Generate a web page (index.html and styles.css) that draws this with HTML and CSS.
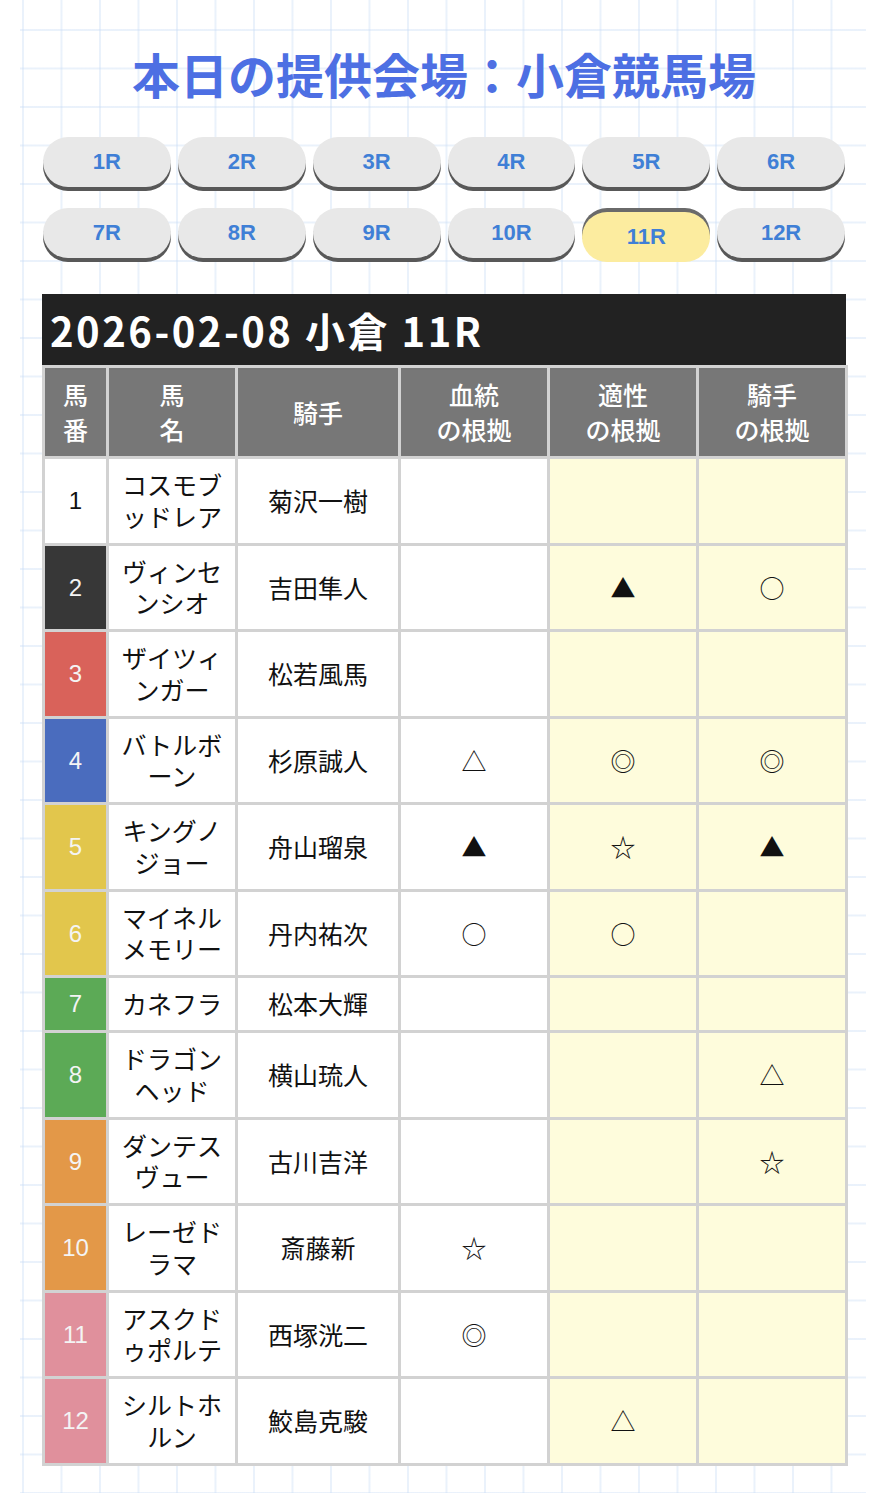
FILE: index.html
```html
<!DOCTYPE html>
<html lang="ja">
<head>
<meta charset="utf-8">
<title>本日の提供会場：小倉競馬場</title>
<link rel="stylesheet" href="styles.css">
</head>
<body>
<div class="page">
  <h1 class="venue">本日の提供会場：小倉競馬場</h1>
  <nav class="races">
    <a class="race-btn">1R</a>
    <a class="race-btn">2R</a>
    <a class="race-btn">3R</a>
    <a class="race-btn">4R</a>
    <a class="race-btn">5R</a>
    <a class="race-btn">6R</a>
    <a class="race-btn">7R</a>
    <a class="race-btn">8R</a>
    <a class="race-btn">9R</a>
    <a class="race-btn">10R</a>
    <a class="race-btn active">11R</a>
    <a class="race-btn">12R</a>
  </nav>

  <div class="race-title">2026-02-08 小倉 11R</div>
  <table class="entries">
    <colgroup>
      <col class="c-num"><col class="c-name"><col class="c-jockey"><col class="c-mark"><col class="c-mark"><col class="c-mark">
    </colgroup>
    <thead>
      <tr>
        <th>馬<br>番</th>
        <th>馬<br>名</th>
        <th>騎手</th>
        <th>血統<br>の根拠</th>
        <th>適性<br>の根拠</th>
        <th>騎手<br>の根拠</th>
      </tr>
    </thead>
    <tbody>
      <tr>
        <td class="num w1">1</td><td>コスモブ<br>ッドレア</td><td>菊沢一樹</td>
        <td class="mark"></td><td class="mark hl"></td><td class="mark hl"></td>
      </tr>
      <tr>
        <td class="num w2">2</td><td>ヴィンセ<br>ンシオ</td><td>吉田隼人</td>
        <td class="mark"></td><td class="mark hl">▲</td><td class="mark hl">○</td>
      </tr>
      <tr>
        <td class="num w3">3</td><td>ザイツィ<br>ンガー</td><td>松若風馬</td>
        <td class="mark"></td><td class="mark hl"></td><td class="mark hl"></td>
      </tr>
      <tr>
        <td class="num w4">4</td><td>バトルボ<br>ーン</td><td>杉原誠人</td>
        <td class="mark">△</td><td class="mark hl">◎</td><td class="mark hl">◎</td>
      </tr>
      <tr>
        <td class="num w5">5</td><td>キングノ<br>ジョー</td><td>舟山瑠泉</td>
        <td class="mark">▲</td><td class="mark hl">☆</td><td class="mark hl">▲</td>
      </tr>
      <tr>
        <td class="num w5">6</td><td>マイネル<br>メモリー</td><td>丹内祐次</td>
        <td class="mark">○</td><td class="mark hl">○</td><td class="mark hl"></td>
      </tr>
      <tr>
        <td class="num w6">7</td><td>カネフラ</td><td>松本大輝</td>
        <td class="mark"></td><td class="mark hl"></td><td class="mark hl"></td>
      </tr>
      <tr>
        <td class="num w6">8</td><td>ドラゴン<br>ヘッド</td><td>横山琉人</td>
        <td class="mark"></td><td class="mark hl"></td><td class="mark hl">△</td>
      </tr>
      <tr>
        <td class="num w7">9</td><td>ダンテス<br>ヴュー</td><td>古川吉洋</td>
        <td class="mark"></td><td class="mark hl"></td><td class="mark hl">☆</td>
      </tr>
      <tr>
        <td class="num w7">10</td><td>レーゼド<br>ラマ</td><td>斎藤新</td>
        <td class="mark">☆</td><td class="mark hl"></td><td class="mark hl"></td>
      </tr>
      <tr>
        <td class="num w8">11</td><td>アスクド<br>ゥポルテ</td><td>西塚洸二</td>
        <td class="mark">◎</td><td class="mark hl"></td><td class="mark hl"></td>
      </tr>
      <tr>
        <td class="num w8">12</td><td>シルトホ<br>ルン</td><td>鮫島克駿</td>
        <td class="mark"></td><td class="mark hl">△</td><td class="mark hl"></td>
      </tr>
    </tbody>
  </table>
</div>
</body>
</html>
```

FILE: styles.css
```css
html, body {
  margin: 0;
  padding: 0;
  background: #ffffff;
}

body {
  font-family: "Noto Sans CJK JP", "Noto Sans", sans-serif;
  color: #111;
}

.page {
  width: 804px;
  min-height: 1421px;
  margin-left: 20px;
  padding: 44px 20px 28px 22px;
  background-color: #ffffff;
  background-image:
    linear-gradient(rgba(200, 220, 245, 0.38) 2px, transparent 2px),
    linear-gradient(90deg, rgba(200, 220, 245, 0.38) 2px, transparent 2px);
  background-size: 38.5px 38.5px;
  background-position: 2px 29px;
}

.venue {
  margin: 0;
  text-align: center;
  font-size: 48px;
  line-height: 58px;
  font-weight: 700;
  color: #4d6fe3;
}

.races {
  display: grid;
  grid-template-columns: repeat(6, 1fr);
  column-gap: 7px;
  row-gap: 21px;
  margin-top: 35px;
  margin-left: 1px;
  margin-right: 1px;
}

.race-btn {
  display: flex;
  align-items: center;
  justify-content: center;
  height: 50px;
  border-radius: 25px;
  background: #e8e8e8;
  box-shadow: 0 4px 0 #585858;
  color: #3f7fd6;
  font-family: "Liberation Sans", "Noto Sans CJK JP", sans-serif;
  font-weight: 700;
  font-size: 22px;
}

.race-btn.active {
  background: #fcec9f;
  transform: translateY(4px);
  box-shadow: 0 -4px 0 #6a6a6a;
}

.race-title {
  margin-top: 36px;
  height: 71px;
  display: flex;
  align-items: center;
  padding-left: 8px;
  background: #222222;
  color: #ffffff;
  font-family: "Noto Sans CJK JP", sans-serif;
  font-weight: 700;
  font-size: 40px;
  letter-spacing: 2.5px;
}

.entries {
  width: 804px;
  border-collapse: collapse;
  table-layout: fixed;
  border: 3px solid #d2d2d2;
}

.c-num { width: 64px; }
.c-name { width: 129px; }
.c-jockey { width: 163px; }
.c-mark { width: 149px; }

.entries th,
.entries td {
  border: 3px solid #d2d2d2;
  text-align: center;
  vertical-align: middle;
  padding: 0;
}

.entries th {
  background: #777777;
  color: #ffffff;
  font-size: 25px;
  font-weight: 500;
  line-height: 35px;
  padding: 9px 0 9px;
}

.entries td {
  background: #ffffff;
  font-size: 25px;
  line-height: 31.5px;
  padding: 10.25px 0;
  color: #111;
}

.entries td.num {
  font-family: "Liberation Sans", "Noto Sans CJK JP", sans-serif;
  font-size: 24px;
  color: #f4f4f4;
}

.entries td.num.w1 { background: #ffffff; color: #111; }
.entries td.num.w2 { background: #373737; }
.entries td.num.w3 { background: #d9625a; }
.entries td.num.w4 { background: #4a6cbe; }
.entries td.num.w5 { background: #e2c64c; }
.entries td.num.w6 { background: #5caa56; }
.entries td.num.w7 { background: #e39848; }
.entries td.num.w8 { background: #e0909c; }

.entries td.mark {
  font-family: "Noto Sans CJK JP", sans-serif;
  font-size: 25px;
}

.entries td.hl {
  background: #fefcdc;
}
```
